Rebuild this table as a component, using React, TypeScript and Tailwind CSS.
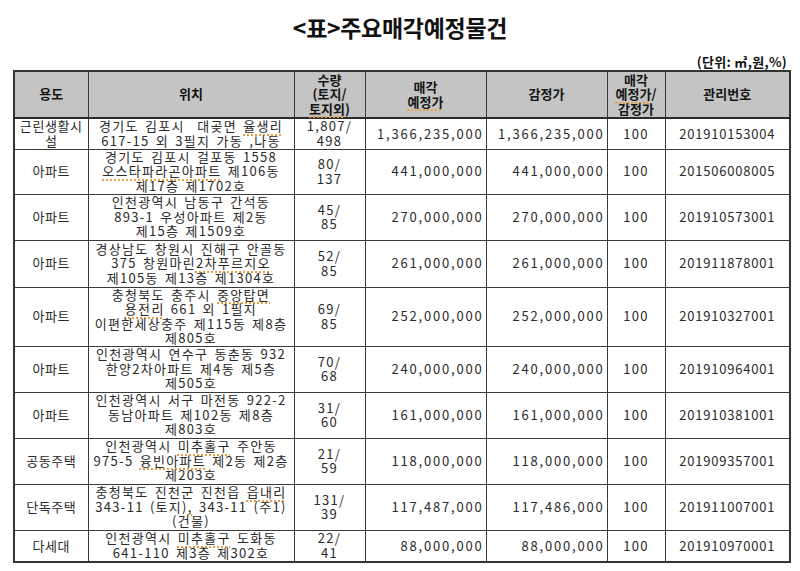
import React from "react";

type Seg = string | { u: string };
type Line = Seg[];

const U = ({ children }: { children: React.ReactNode }) => (
  <span className="underline decoration-dotted decoration-[#e3a04a] decoration-[1.5px] underline-offset-[3px]">
    {children}
  </span>
);

const renderLines = (lines: Line[]) =>
  lines.map((line, i) => (
    <div key={i} className="whitespace-pre">
      {line.map((s, j) =>
        typeof s === "string" ? <React.Fragment key={j}>{s}</React.Fragment> : <U key={j}>{s.u}</U>
      )}
    </div>
  ));

type Row = {
  h: string;
  use: Line[];
  loc: Line[];
  qty: Line[];
  sale: string;
  appr: string;
  ratio: string;
  id: string;
};

const rows: Row[] = [
  {
    h: "h-[31px]",
    use: [["근린생활시"], ["설"]],
    loc: [["경기도 김포시  대곶면 ", { u: "율생리" }], ["617-15 외 3필지 가동 ,나동"]],
    qty: [["1,807/"], ["498"]],
    sale: "1,366,235,000",
    appr: "1,366,235,000",
    ratio: "100",
    id: "201910153004",
  },
  {
    h: "h-[45px]",
    use: [["아파트"]],
    loc: [["경기도 김포시 걸포동 1558"], [{ u: "오스타파라곤아파트" }, " 제106동"], ["제17층 제1702호"]],
    qty: [["80/"], ["137"]],
    sale: "441,000,000",
    appr: "441,000,000",
    ratio: "100",
    id: "201506008005",
  },
  {
    h: "h-[46px]",
    use: [["아파트"]],
    loc: [["인천광역시 남동구 간석동"], ["893-1 우성아파트 제2동"], ["제15층 제1509호"]],
    qty: [["45/"], ["85"]],
    sale: "270,000,000",
    appr: "270,000,000",
    ratio: "100",
    id: "201910573001",
  },
  {
    h: "h-[47px]",
    use: [["아파트"]],
    loc: [["경상남도 창원시 진해구 안골동"], ["375 창원마린", { u: "2차푸르지오" }], ["제105동 제13층 제1304호"]],
    qty: [["52/"], ["85"]],
    sale: "261,000,000",
    appr: "261,000,000",
    ratio: "100",
    id: "201911878001",
  },
  {
    h: "h-[58px]",
    use: [["아파트"]],
    loc: [
      ["충청북도 충주시 ", { u: "중앙탑면" }],
      [{ u: "용전리" }, " 661 외 1필지"],
      ["이편한세상충주 제115동 제8층"],
      ["제805호"],
    ],
    qty: [["69/"], ["85"]],
    sale: "252,000,000",
    appr: "252,000,000",
    ratio: "100",
    id: "201910327001",
  },
  {
    h: "h-[46px]",
    use: [["아파트"]],
    loc: [["인천광역시 연수구 동춘동 932"], ["한양2차아파트 제4동 제5층"], ["제505호"]],
    qty: [["70/"], ["68"]],
    sale: "240,000,000",
    appr: "240,000,000",
    ratio: "100",
    id: "201910964001",
  },
  {
    h: "h-[46px]",
    use: [["아파트"]],
    loc: [["인천광역시 서구 마전동 922-2"], ["동남아파트 제102동 제8층"], ["제803호"]],
    qty: [["31/"], ["60"]],
    sale: "161,000,000",
    appr: "161,000,000",
    ratio: "100",
    id: "201910381001",
  },
  {
    h: "h-[46px]",
    use: [["공동주택"]],
    loc: [["인천광역시 ", { u: "미추홀구" }, " 주안동"], ["975-5 ", { u: "융빈아파트" }, " 제2동 제2층"], ["제203호"]],
    qty: [["21/"], ["59"]],
    sale: "118,000,000",
    appr: "118,000,000",
    ratio: "100",
    id: "201909357001",
  },
  {
    h: "h-[46px]",
    use: [["단독주택"]],
    loc: [["충청북도 진천군 진천읍 ", { u: "읍내리" }], ["343-11 (토지)", { u: "," }, " 343-11 (주1)"], ["(건물)"]],
    qty: [["131/"], ["39"]],
    sale: "117,487,000",
    appr: "117,486,000",
    ratio: "100",
    id: "201911007001",
  },
  {
    h: "h-[32px]",
    use: [["다세대"]],
    loc: [["인천광역시 ", { u: "미추홀구" }, " 도화동"], ["641-110 제3층 제302호"]],
    qty: [["22/"], ["41"]],
    sale: "88,000,000",
    appr: "88,000,000",
    ratio: "100",
    id: "201910970001",
  },
];

const td = "border border-[#3a3a3a] align-middle p-0";

export default function App() {
  return (
    <div
      className="w-[800px] h-[571px] bg-white text-[#2a2a2a] overflow-hidden"
      style={{ fontFamily: '"Noto Sans CJK KR", "Noto Sans", sans-serif' }}
    >
      <div className="pt-[14px] h-[40px] text-center text-[23px] leading-[26px] font-bold tracking-[-0.3px] text-[#111]">
        &lt;표&gt;주요매각예정물건
      </div>
      <div className="mt-[14px] h-[16px] pr-[13px] text-right text-[13px] leading-[16px] font-bold text-[#111] tracking-[0.3px]">
        (단위: ㎡,원,%)
      </div>
      <table className="ml-[13px] w-[776px] table-fixed border-collapse border-2 border-[#333] text-[13px] leading-[14.5px] tracking-[1.3px] [word-spacing:2px]">
        <colgroup>
          <col className="w-[74px]" />
          <col className="w-[206px]" />
          <col className="w-[71px]" />
          <col className="w-[121px]" />
          <col className="w-[121px]" />
          <col className="w-[58px]" />
          <col className="w-[125px]" />
        </colgroup>
        <thead>
          <tr className="h-[47px] bg-[#c4c4c4] font-bold text-center text-[#151515] tracking-[0px] [word-spacing:0px]">
            <th className={`${td} border-b-2 border-b-[#2a2a2a]`}>용도</th>
            <th className={`${td} border-b-2 border-b-[#2a2a2a]`}>위치</th>
            <th className={`${td} border-b-2 border-b-[#2a2a2a] font-bold`}>
              <div>수량</div>
              <div>(토지/</div>
              <div>
                <U>토지외</U>)
              </div>
            </th>
            <th className={`${td} border-b-2 border-b-[#2a2a2a]`}>
              <div>매각</div>
              <div>
                <U>예정가</U>
              </div>
            </th>
            <th className={`${td} border-b-2 border-b-[#2a2a2a]`}>감정가</th>
            <th className={`${td} border-b-2 border-b-[#2a2a2a]`}>
              <div>매각</div>
              <div>
                <U>예정가</U>/
              </div>
              <div>감정가</div>
            </th>
            <th className={`${td} border-b-2 border-b-[#2a2a2a]`}>관리번호</th>
          </tr>
        </thead>
        <tbody>
          {rows.map((r, i) => (
            <tr key={i} className={r.h}>
              <td className={`${td} text-center tracking-[0.6px]`}>{renderLines(r.use)}</td>
              <td className={`${td} text-center`}>{renderLines(r.loc)}</td>
              <td className={`${td} text-center`}>{renderLines(r.qty)}</td>
              <td className={`${td} text-right pr-[2px] tracking-[1.8px]`}>{r.sale}</td>
              <td className={`${td} text-right pr-[2px] tracking-[1.8px]`}>{r.appr}</td>
              <td className={`${td} text-center`}>{r.ratio}</td>
              <td className={`${td} text-center tracking-[0.8px]`}>{r.id}</td>
            </tr>
          ))}
        </tbody>
      </table>
    </div>
  );
}
